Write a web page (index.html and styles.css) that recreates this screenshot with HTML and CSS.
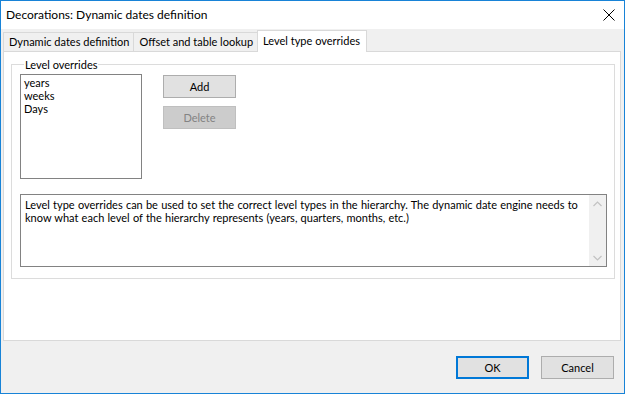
FILE: index.html
```html
<!DOCTYPE html>
<html>
<head>
<meta charset="utf-8">
<link rel="stylesheet" href="styles.css">
</head>
<body>
<div class="window">
  <div class="titlebar">
    <span class="title">Decorations: Dynamic dates definition</span>
    <svg class="close" width="12" height="12" viewBox="0 0 12 12"><path d="M0.5 0.5L11.5 11.5M11.5 0.5L0.5 11.5" stroke="#000" stroke-width="1" fill="none"/></svg>
  </div>
  <div class="content">
    <div class="tabs">
      <div class="tab">Dynamic dates definition</div>
      <div class="tab">Offset and table lookup</div>
      <div class="tab active">Level type overrides</div>
    </div>
    <div class="panel">
      <fieldset class="group">
        <legend class="legend">Level overrides</legend>
        <div class="toprow">
          <div class="listbox">
            <div class="item">years</div>
            <div class="item">weeks</div>
            <div class="item">Days</div>
          </div>
          <div class="btncol">
            <div class="btn">Add</div>
            <div class="btn disabled">Delete</div>
          </div>
        </div>
        <div class="memo">
          <div class="memotext">Level type overrides can be used to set the correct level types in the hierarchy. The dynamic date engine needs to<br>know what each level of the hierarchy represents (years, quarters, months, etc.)</div>
          <div class="scrollbar">
            <svg width="9" height="6" viewBox="0 0 9 6"><path d="M0.5 5L4.5 1L8.5 5" stroke="#c2c2c2" stroke-width="1.2" fill="none"/></svg>
            <svg width="9" height="6" viewBox="0 0 9 6"><path d="M0.5 1L4.5 5L8.5 1" stroke="#c2c2c2" stroke-width="1.2" fill="none"/></svg>
          </div>
        </div>
      </fieldset>
    </div>
    <div class="footer">
      <div class="btn dlg primary">OK</div>
      <div class="btn dlg">Cancel</div>
    </div>
  </div>
</div>
</body>
</html>
```
FILE: styles.css
```css
* { box-sizing: border-box; }
html, body { margin: 0; padding: 0; }
body {
  width: 625px;
  height: 394px;
  font-family: Lato, "Liberation Sans", sans-serif;
  font-size: 11px;
  color: #000;
  overflow: hidden;
}
.window {
  width: 625px;
  height: 394px;
  border: 1px solid #1883d7;
  display: flex;
  flex-direction: column;
  background: #f0f0f0;
}
.titlebar {
  height: 28px;
  background: #fff;
  display: flex;
  align-items: center;
  justify-content: space-between;
  padding: 0 9px 0 5px;
  flex: none;
}
.title { font-size: 12px; line-height: 16px; }
.close { margin-top: -1px; }
.content {
  flex: 1;
  display: flex;
  flex-direction: column;
  padding: 0 3px 0 2px;
}
.tabs {
  display: flex;
  align-items: flex-end;
  height: 22px;
  flex: none;
}
.tab {
  height: 19px;
  padding: 0 4px 0 5px;
  border: 1px solid #d9d9d9;
  border-bottom: none;
  border-right: none;
  background: #f0f0f0;
  line-height: 18px;
  white-space: nowrap;
}
.tab.active {
  height: 22px;
  margin-bottom: -1px;
  background: #fff;
  border-right: 1px solid #d9d9d9;
  position: relative;
  z-index: 1;
  line-height: 19px;
  padding: 0 6px 0 5px;
}
.panel {
  height: 290px;
  border: 1px solid #d9d9d9;
  background: #fff;
  padding: 5px 5px 0 7px;
  flex: none;
}
.group {
  margin: 0;
  padding: 0 0 0 8px;
  border: 1px solid #dcdcdc;
  height: 222px;
  min-width: 0;
}
.legend {
  padding: 0 1px;
  margin-left: 4px;
  line-height: 15px;
  color: #000;
}
.toprow {
  display: flex;
  align-items: flex-start;
  margin-top: 2px;
}
.listbox {
  width: 122px;
  height: 105px;
  border: 1px solid #828282;
  padding: 1px 3px;
  flex: none;
}
.item { line-height: 13px; height: 13px; }
.btncol {
  display: flex;
  flex-direction: column;
  gap: 8px;
  margin-left: 21px;
  margin-top: 1px;
}
.btn {
  width: 73px;
  height: 23px;
  background: #e1e1e1;
  border: 1px solid #adadad;
  display: flex;
  align-items: center;
  justify-content: center;
  line-height: 15px;
}
.btn.disabled {
  background: #cccccc;
  border-color: #bfbfbf;
  color: #838383;
}
.memo {
  margin-top: 15px;
  width: 587px;
  height: 73px;
  border: 1px solid #828282;
  display: flex;
}
.memotext {
  flex: 1;
  padding: 3px 4px;
  line-height: 13px;
  word-spacing: 0.4px;
  white-space: nowrap;
  overflow: hidden;
}
.scrollbar {
  width: 17px;
  background: #f0f0f0;
  display: flex;
  flex-direction: column;
  justify-content: space-between;
  align-items: center;
  padding: 6px 0 5px;
}
.footer {
  flex: 1;
  display: flex;
  justify-content: flex-end;
  align-items: flex-start;
  gap: 12px;
  padding: 15px 7px 0 0;
}
.btn.dlg { width: 73px; }
.btn.primary { border: 2px solid #0078d7; }
```
